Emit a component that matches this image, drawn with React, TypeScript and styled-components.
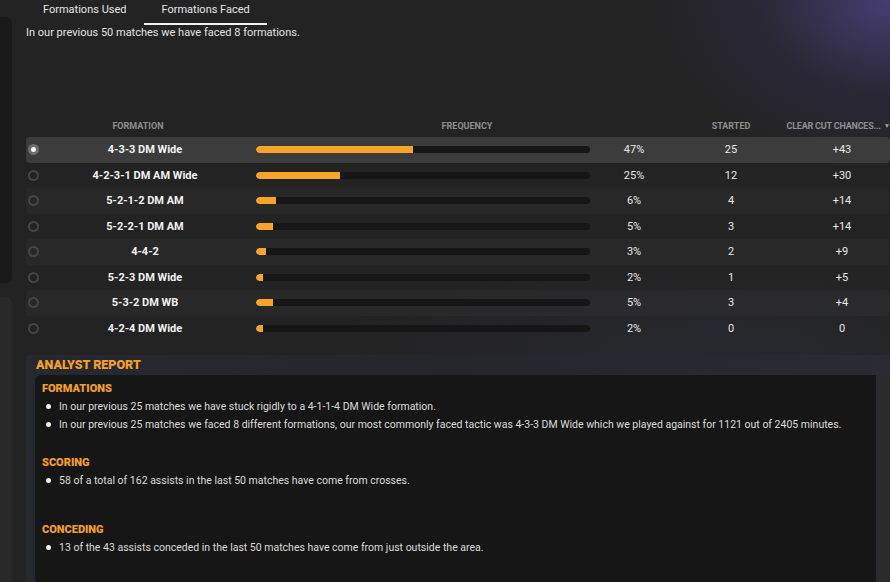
import React from "react";
import styled, { createGlobalStyle } from "styled-components";

const GlobalStyle = createGlobalStyle`
  html, body {
    margin: 0;
    padding: 0;
    background: #232323;
    font-family: Roboto, "Liberation Sans", sans-serif;
    overflow: hidden;
  }
  * {
    box-sizing: border-box;
  }
`;

type Formation = {
  name: string;
  pct: number;
  started: number;
  chances: string;
};

const formations: Formation[] = [
  { name: "4-3-3 DM Wide", pct: 47, started: 25, chances: "+43" },
  { name: "4-2-3-1 DM AM Wide", pct: 25, started: 12, chances: "+30" },
  { name: "5-2-1-2 DM AM", pct: 6, started: 4, chances: "+14" },
  { name: "5-2-2-1 DM AM", pct: 5, started: 3, chances: "+14" },
  { name: "4-4-2", pct: 3, started: 2, chances: "+9" },
  { name: "5-2-3 DM Wide", pct: 2, started: 1, chances: "+5" },
  { name: "5-3-2 DM WB", pct: 5, started: 3, chances: "+4" },
  { name: "4-2-4 DM Wide", pct: 2, started: 0, chances: "0" },
];

const report = [
  {
    title: "FORMATIONS",
    space: 22,
    items: [
      "In our previous 25 matches we have stuck rigidly to a 4-1-1-4 DM Wide formation.",
      "In our previous 25 matches we faced 8 different formations, our most commonly faced tactic was 4-3-3 DM Wide which we played against for 1121 out of 2405 minutes.",
    ],
  },
  {
    title: "SCORING",
    space: 33,
    items: ["58 of a total of 162 assists in the last 50 matches have come from crosses."],
  },
  {
    title: "CONCEDING",
    space: 0,
    items: ["13 of the 43 assists conceded in the last 50 matches have come from just outside the area."],
  },
];

export default function App() {
  return (
    <>
      <GlobalStyle />
      <Page>
        <Side>
          <SideTop />
          <SideBottom />
        </Side>
        <Main>
          <Tabs>
            <Tab>Formations Used</Tab>
            <Tab $active>Formations Faced</Tab>
          </Tabs>
          <Summary>In our previous 50 matches we have faced 8 formations.</Summary>

          <Table>
            <HeadRow>
              <HeadFormation>FORMATION</HeadFormation>
              <HeadFrequency>FREQUENCY</HeadFrequency>
              <HeadCell>STARTED</HeadCell>
              <HeadSort>
                CLEAR CUT CHANCES...
                <SortArrow>▼</SortArrow>
              </HeadSort>
            </HeadRow>
            {formations.map((f, i) => (
              <Row key={f.name} $selected={i === 0} $even={i % 2 === 0}>
                <RadioCell>
                  <Radio $on={i === 0} />
                </RadioCell>
                <Name>{f.name}</Name>
                <BarCell>
                  <Track>
                    <Fill style={{ width: `${f.pct}%` }} />
                  </Track>
                </BarCell>
                <Value>{f.pct}%</Value>
                <Value>{f.started}</Value>
                <Value>{f.chances}</Value>
              </Row>
            ))}
          </Table>

          <Report>
            <ReportTitle>ANALYST REPORT</ReportTitle>
            <ReportWrap>
              <ReportBody>
                {report.map((s) => (
                  <Section key={s.title} $space={s.space}>
                    <SectionTitle>{s.title}</SectionTitle>
                    {s.items.map((t) => (
                      <Bullet key={t}>{t}</Bullet>
                    ))}
                  </Section>
                ))}
              </ReportBody>
              <ReportSide />
            </ReportWrap>
          </Report>
        </Main>
      </Page>
    </>
  );
}

const Page = styled.div`
  display: flex;
  width: 890px;
  height: 582px;
  overflow: hidden;
  background:
    radial-gradient(ellipse 240px 170px at 100% 0%, rgba(74, 64, 122, 0.9), rgba(58, 50, 95, 0.3) 55%, transparent 100%),
    radial-gradient(ellipse 380px 90px at 80% 60%, rgba(60, 64, 100, 0.18), transparent 100%),
    #232323;
`;

const Side = styled.div`
  display: flex;
  flex-direction: column;
  width: 12px;
`;

const SideTop = styled.div`
  margin-top: 17px;
  height: 266px;
  background: #1a1a1a;
  border-radius: 0 6px 6px 0;
`;

const SideBottom = styled.div`
  margin-top: 14px;
  flex: 1;
  background: #292929;
  border-radius: 0 6px 0 0;
`;

const Main = styled.div`
  display: flex;
  flex-direction: column;
  width: 878px;
  padding-left: 14px;
`;

const Tabs = styled.div`
  display: flex;
  gap: 1px;
  height: 25px;
`;

const Tab = styled.div<{ $active?: boolean }>`
  padding: 3px 17px 0;
  line-height: 14px;
  font-size: 11px;
  color: #e6e6e6;
  border-bottom: 2px solid ${(p) => (p.$active ? "#f2f2f2" : "transparent")};
`;

const Summary = styled.div`
  margin-top: 1px;
  line-height: 14px;
  font-size: 11px;
  color: #e2e2e2;
`;

const Table = styled.div`
  margin-top: 74px;
  display: flex;
  flex-direction: column;
`;

const grid = `
  display: grid;
  grid-template-columns: 14px 210px 350px 68px 126px minmax(0, 1fr);
  align-items: center;
`;

const HeadRow = styled.div`
  ${grid}
  height: 23px;
  font-size: 9px;
  font-weight: 700;
  color: #8f8f8f;
`;

const HeadCell = styled.div`
  text-align: center;
  white-space: nowrap;
`;

const HeadFormation = styled(HeadCell)`
  grid-column: 1 / 3;
`;

const HeadFrequency = styled(HeadCell)`
  grid-column: 3 / 5;
  padding-left: 16px;
`;

const HeadSort = styled.div`
  display: flex;
  justify-content: flex-end;
  align-items: center;
  white-space: nowrap;
  letter-spacing: -0.2px;
`;

const SortArrow = styled.span`
  margin-left: 3px;
  font-size: 6.5px;
  color: #a0a0a0;
`;

const Row = styled.div<{ $selected: boolean; $even: boolean }>`
  ${grid}
  height: 25.5px;
  border-radius: 4px;
  background: ${(p) =>
    p.$selected ? "#3c3c3c" : p.$even ? "rgba(255,255,255,0.025)" : "transparent"};
`;

const RadioCell = styled.div`
  display: flex;
  justify-content: center;
`;

const Radio = styled.div<{ $on: boolean }>`
  flex: none;
  width: 11px;
  height: 11px;
  border-radius: 50%;
  display: flex;
  align-items: center;
  justify-content: center;
  background: ${(p) => (p.$on ? "#6e6e6e" : "transparent")};
  border: 2px solid ${(p) => (p.$on ? "#6e6e6e" : "#464646")};

  &::after {
    content: "";
    width: 5px;
    height: 5px;
    border-radius: 50%;
    background: ${(p) => (p.$on ? "#fafafa" : "transparent")};
  }
`;

const Name = styled.div`
  text-align: center;
  font-size: 11px;
  font-weight: 700;
  color: #f2f2f2;
`;

const BarCell = styled.div`
  padding: 0 10px 0 6px;
`;

const Track = styled.div`
  height: 7px;
  border-radius: 4px;
  background: #161616;
  overflow: hidden;
`;

const Fill = styled.div`
  height: 100%;
  background: #f6a42a;
  border-radius: 4px 0 0 4px;
`;

const Value = styled.div`
  text-align: center;
  font-size: 11px;
  color: #e8e8e8;
`;

const Report = styled.div`
  margin-top: 14px;
  flex: 1;
  display: flex;
  flex-direction: column;
  background: linear-gradient(90deg, #262931 0%, #24262c 50%, #2a2b33 100%);
  border-radius: 3px 0 0 0;
`;

const ReportTitle = styled.div`
  height: 20px;
  padding: 2px 0 0 10px;
  line-height: 16px;
  font-size: 12.5px;
  font-weight: 900;
  color: #f5a025;
`;

const ReportWrap = styled.div`
  flex: 1;
  display: flex;
  padding-left: 9px;
`;

const ReportBody = styled.div`
  width: 841px;
  padding: 6px 0 0 7px;
  background: #161616;
  border-radius: 6px 0 0 0;
`;

const ReportSide = styled.div`
  flex: 1;
  background: #2b2b2f;
`;

const Section = styled.div<{ $space: number }>`
  margin-bottom: ${(p) => p.$space}px;
`;

const SectionTitle = styled.div`
  line-height: 16px;
  font-size: 11px;
  font-weight: 900;
  color: #f5a025;
`;

const Bullet = styled.div`
  display: flex;
  align-items: center;
  height: 18px;
  padding-left: 4px;
  font-size: 10.5px;
  color: #dcdcdc;
  white-space: nowrap;

  &::before {
    content: "";
    width: 5px;
    height: 5px;
    border-radius: 50%;
    background: #f4f4f4;
    margin-right: 8px;
  }
`;
